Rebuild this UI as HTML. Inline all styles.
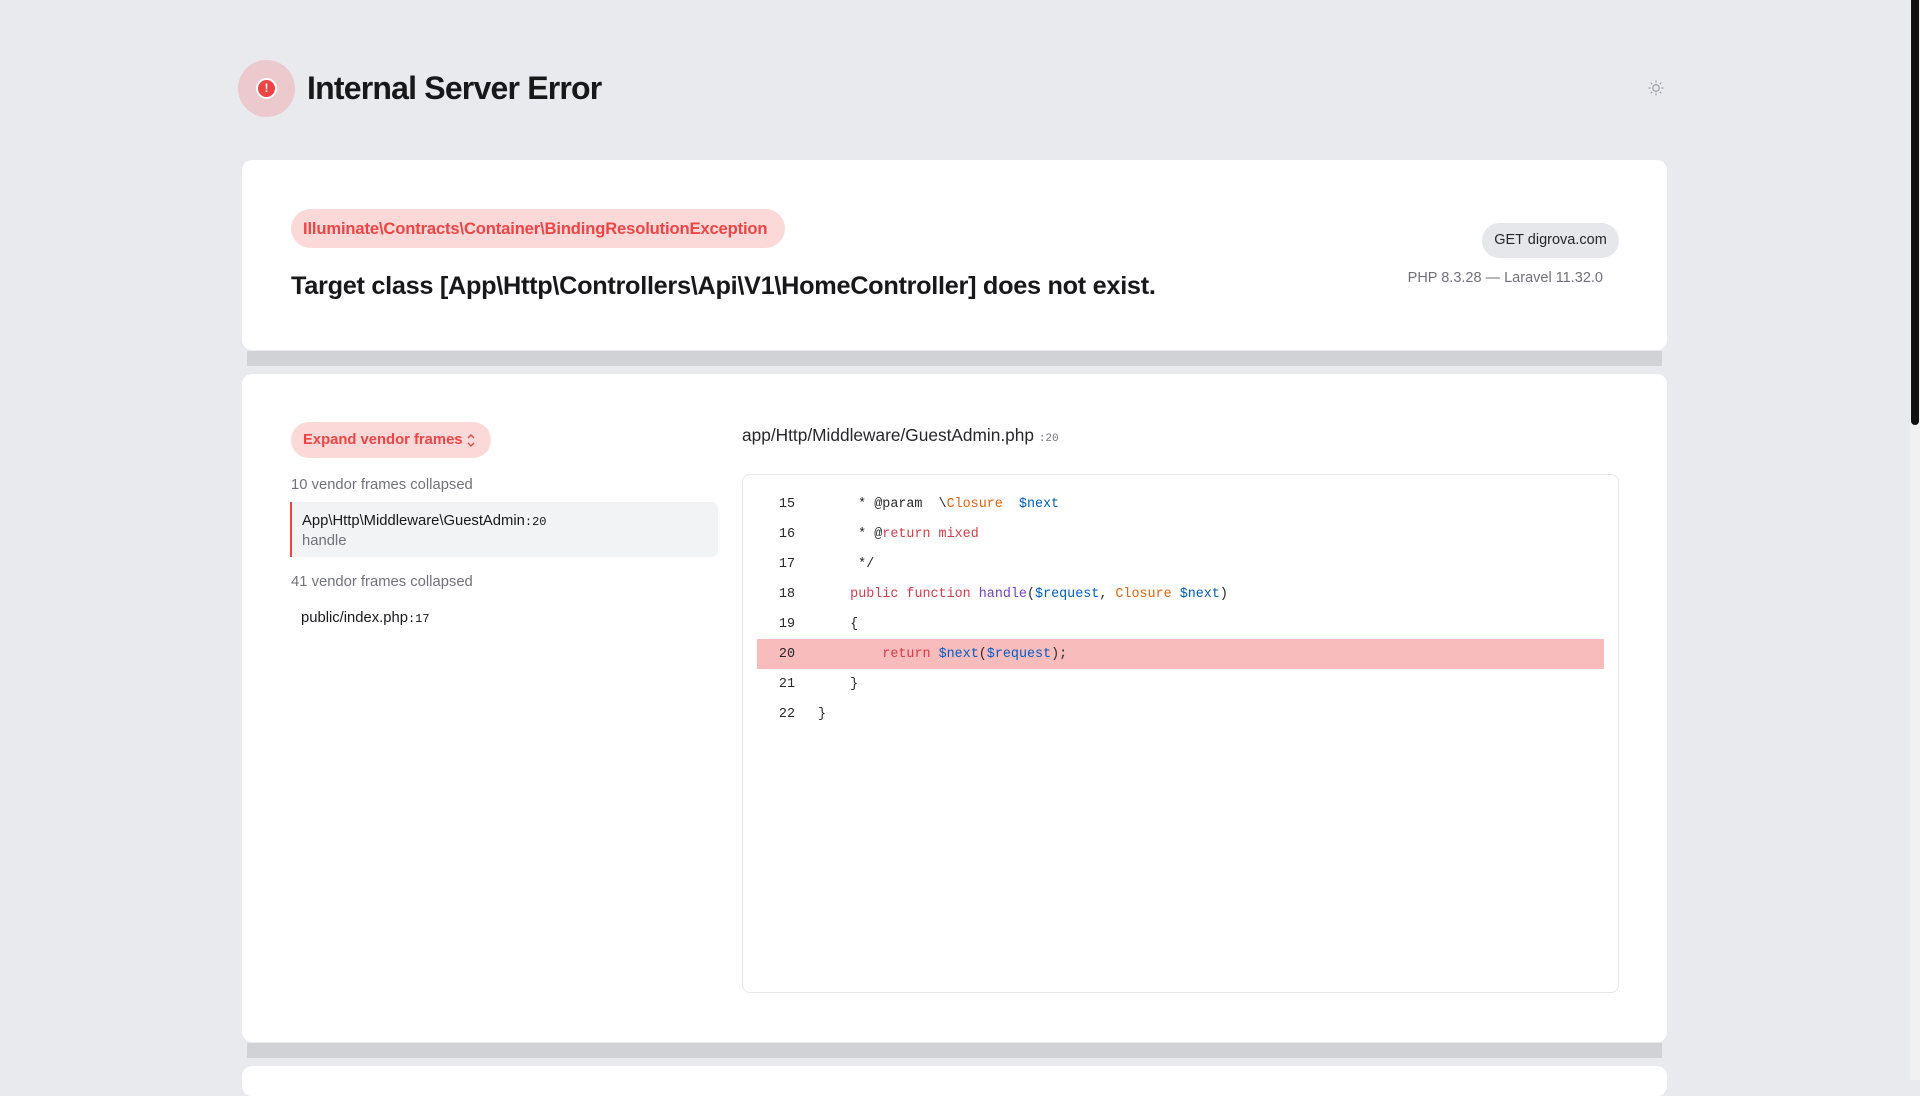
<!DOCTYPE html>
<html><head><meta charset="utf-8"><style>
*{box-sizing:border-box;margin:0;padding:0}
html,body{width:1920px;height:1080px;overflow:hidden;background:#e9eaee;font-family:"Liberation Sans",sans-serif;color:#18181b}
.abs{position:absolute}
.card{position:absolute;left:242px;width:1425px;background:#fff;border-radius:10px}
.bar{position:absolute;left:247px;width:1415px;background:#d1d2d6;height:15px}
.mono{font-family:"Liberation Mono",monospace}
.code{position:absolute;left:742px;top:474px;width:877px;height:519px;border:1px solid #e5e7eb;border-radius:8px;background:#fff}
.ln{position:absolute;left:12px;width:980px;height:30px;font-family:"Liberation Mono",monospace;font-size:13.4px;line-height:30px;white-space:pre}
.ln .num{display:inline-block;width:38px;text-align:right;color:#27272a}
.ln .t{position:absolute;left:61px;color:#27272a}
.r{color:#d73a49}.o{color:#e36209}.b{color:#005cc5}.p{color:#6f42c1}
</style></head><body>
<div class="abs" style="left:238px;top:60px;width:57px;height:57px;border-radius:50%;background:#ecc9cd"></div>
<div class="abs" style="left:256px;top:78px;width:21px;height:21px;border-radius:50%;background:#ef4444;border:2px solid #fff;color:#fff;font-weight:bold;font-size:12px;line-height:17px;text-align:center">!</div>
<div class="abs" style="left:307px;top:70px;font-size:32px;font-weight:bold;letter-spacing:-0.8px">Internal Server Error</div>
<svg class="abs" style="left:1647px;top:79px" width="18" height="18" viewBox="0 0 18 18" fill="none" stroke="#a1a1aa" stroke-width="1.3"><circle cx="9" cy="9" r="3.3"/><path d="M9 1.5v2M9 14.5v2M1.5 9h2M14.5 9h2M3.7 3.7l1.4 1.4M12.9 12.9l1.4 1.4M3.7 14.3l1.4-1.4M12.9 5.1l1.4-1.4"/></svg>
<div class="abs" style="left:1910px;top:0;width:10px;height:1080px;background:#f1f1f1"></div>
<div class="abs" style="left:1911px;top:0;width:8px;height:425px;background:#111;border-radius:0 0 4px 4px"></div>

<div class="card" style="top:160px;height:190px"></div>
<div class="bar" style="top:351px"></div>
<div class="abs" style="left:291px;top:209px;width:494px;height:39px;border-radius:20px;background:#fcd9d9;color:#ef4444;font-weight:bold;font-size:16.6px;line-height:39px;padding-left:12px;letter-spacing:-0.15px">Illuminate\Contracts\Container\BindingResolutionException</div>
<div class="abs" style="left:291px;top:272px;font-size:25.3px;font-weight:bold;letter-spacing:-0.3px">Target class [App\Http\Controllers\Api\V1\HomeController] does not exist.</div>
<div class="abs" style="left:1482px;top:223px;width:137px;height:35px;border-radius:18px;background:#e5e7eb;font-size:14.5px;line-height:35px;text-align:center;color:#27272a">GET digrova.com</div>
<div class="abs" style="left:1380px;top:270px;width:223px;text-align:right;font-size:14.5px;color:#71717a">PHP 8.3.28 — Laravel 11.32.0</div>

<div class="card" style="top:374px;height:668px"></div>
<div class="bar" style="top:1043px"></div>
<div class="card" style="top:1066px;height:30px"></div>

<div class="abs" style="left:291px;top:422px;width:200px;height:36px;border-radius:18px;background:#fcd9d9;color:#ef4444;font-weight:bold;font-size:14.8px;line-height:36px;padding-left:12px">Expand vendor frames
<svg style="position:absolute;left:175px;top:11px" width="10" height="15" viewBox="0 0 10 15" fill="none" stroke="#ef4444" stroke-width="1.4"><path d="M2 5l3-3 3 3M2 10l3 3 3-3"/></svg></div>
<div class="abs" style="left:291px;top:477px;font-size:14.8px;color:#71717a">10 vendor frames collapsed</div>
<div class="abs" style="left:290px;top:502px;width:428px;height:55px;background:#f2f3f5;border-left:2px solid #ef4444;border-radius:0 6px 6px 0"></div>
<div class="abs" style="left:302px;top:513px;font-size:14.8px;color:#18181b">App\Http\Middleware\GuestAdmin<span class="mono" style="font-size:12px">:20</span></div>
<div class="abs" style="left:302px;top:533px;font-size:14.8px;color:#71717a">handle</div>
<div class="abs" style="left:291px;top:574px;font-size:14.8px;color:#71717a">41 vendor frames collapsed</div>
<div class="abs" style="left:301px;top:610px;font-size:14.8px;color:#18181b">public/index.php<span class="mono" style="font-size:12px">:17</span></div>

<div class="abs" style="left:742px;top:425px;font-size:17.3px;color:#27272a">app/Http/Middleware/GuestAdmin.php <span class="mono" style="font-size:11px;color:#71717a">:20</span></div>
<div class="code"></div>
<div class="abs" style="left:757px;top:639px;width:847px;height:30px;background:#f8bcbc"></div>
<div class="ln" style="left:757px;top:490px"><span class="num">15</span><span class="t">     * @param  \<span class="o">Closure</span>  <span class="b">$next</span></span></div>
<div class="ln" style="left:757px;top:520px"><span class="num">16</span><span class="t">     * @<span class="r">return mixed</span></span></div>
<div class="ln" style="left:757px;top:550px"><span class="num">17</span><span class="t">     */</span></div>
<div class="ln" style="left:757px;top:580px"><span class="num">18</span><span class="t">    <span class="r">public function</span> <span class="p">handle</span>(<span class="b">$request</span>, <span class="o">Closure</span> <span class="b">$next</span>)</span></div>
<div class="ln" style="left:757px;top:610px"><span class="num">19</span><span class="t">    {</span></div>
<div class="ln" style="left:757px;top:640px"><span class="num">20</span><span class="t">        <span class="r">return</span> <span class="b">$next</span>(<span class="b">$request</span>);</span></div>
<div class="ln" style="left:757px;top:670px"><span class="num">21</span><span class="t">    }</span></div>
<div class="ln" style="left:757px;top:700px"><span class="num">22</span><span class="t">}</span></div>
</body></html>
